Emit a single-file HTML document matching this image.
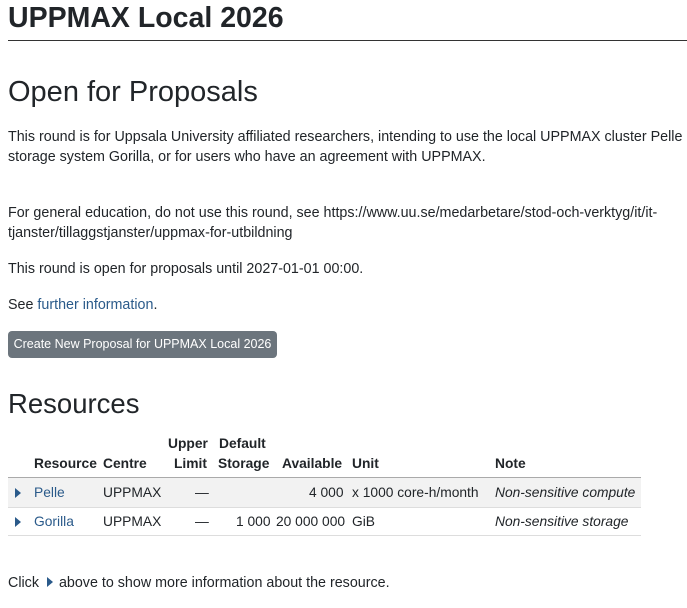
<!DOCTYPE html>
<html><head><meta charset="utf-8"><style>
html,body{margin:0;padding:0;width:687px;height:608px;overflow:hidden;background:#fff}
body{font-family:"Liberation Sans",sans-serif;color:#212529;font-size:14.3px;position:relative}
.a{position:absolute;white-space:nowrap}
.t{font-size:13.8px}
h1{position:absolute;left:8px;top:2px;margin:0;font-size:28.5px;font-weight:bold;white-space:nowrap}
.hr{position:absolute;left:8px;top:40px;width:679px;height:1px;background:#333}
h2{position:absolute;margin:0;font-weight:normal;font-size:29px;left:8px;white-space:nowrap}
a{color:#2a5a8a;text-decoration:none}
.btn{position:absolute;left:8px;top:331px;width:269px;height:27px;background:#6c757d;border-radius:4px;color:#fff;font-size:12.5px;line-height:27px;text-align:center}
.tri{display:inline-block;width:0;height:0;border-top:5px solid transparent;border-bottom:5px solid transparent;border-left:6px solid #2a5a8a}
</style></head><body>
<h1>UPPMAX Local 2026</h1>
<div class="hr"></div>
<h2 style="top:76px">Open for Proposals</h2>
<div class="a" style="left:8px;top:129px">This round is for Uppsala University affiliated researchers, intending to use the local UPPMAX cluster Pelle and</div>
<div class="a" style="left:8px;top:149px">storage system Gorilla, or for users who have an agreement with UPPMAX.</div>
<div class="a" style="left:8px;top:205px">For general education, do not use this round, see https://www.uu.se/medarbetare/stod-och-verktyg/it/it-</div>
<div class="a" style="left:8px;top:225px">tjanster/tillaggstjanster/uppmax-for-utbildning</div>
<div class="a" style="left:8px;top:261px">This round is open for proposals until 2027-01-01 00:00.</div>
<div class="a" style="left:8px;top:297px">See <a>further information</a>.</div>
<div class="btn">Create New Proposal for UPPMAX Local 2026</div>
<h2 style="top:388px;font-size:27.5px">Resources</h2>
<div style="position:absolute;left:8px;top:477px;width:633px;height:29px;background:#f2f2f2;border-top:1px solid #aaa;border-bottom:1px solid #ddd"></div>
<div style="position:absolute;left:8px;top:535px;width:633px;height:1px;background:#ddd"></div>
<div class="t">
<div class="a" style="left:168px;top:436px;font-weight:bold">Upper</div>
<div class="a" style="left:219px;top:436px;font-weight:bold">Default</div>
<div class="a" style="left:34px;top:456px;font-weight:bold">Resource</div>
<div class="a" style="left:103px;top:456px;font-weight:bold">Centre</div>
<div class="a" style="left:174px;top:456px;font-weight:bold">Limit</div>
<div class="a" style="left:218px;top:456px;font-weight:bold">Storage</div>
<div class="a" style="left:282px;top:456px;font-weight:bold">Available</div>
<div class="a" style="left:352px;top:456px;font-weight:bold">Unit</div>
<div class="a" style="left:495px;top:456px;font-weight:bold">Note</div>
<span class="tri a" style="left:15px;top:488px"></span>
<div class="a" style="left:34px;top:485px"><a>Pelle</a></div>
<div class="a" style="left:103px;top:485px">UPPMAX</div>
<div class="a" style="left:195px;top:485px">—</div>
<div class="a" style="left:309px;top:485px">4 000</div>
<div class="a" style="left:352px;top:485px">x 1000 core-h/month</div>
<div class="a" style="left:495px;top:485px;font-style:italic">Non-sensitive compute</div>
<span class="tri a" style="left:15px;top:517px"></span>
<div class="a" style="left:34px;top:514px"><a>Gorilla</a></div>
<div class="a" style="left:103px;top:514px">UPPMAX</div>
<div class="a" style="left:195px;top:514px">—</div>
<div class="a" style="left:236px;top:514px">1 000</div>
<div class="a" style="left:276px;top:514px">20 000 000</div>
<div class="a" style="left:352px;top:514px">GiB</div>
<div class="a" style="left:495px;top:514px;font-style:italic">Non-sensitive storage</div>
</div>
<div class="a" style="left:8px;top:575px">Click <span class="tri" style="margin:0 6px 0 4px"></span>above to show more information about the resource.</div>
</body></html>
